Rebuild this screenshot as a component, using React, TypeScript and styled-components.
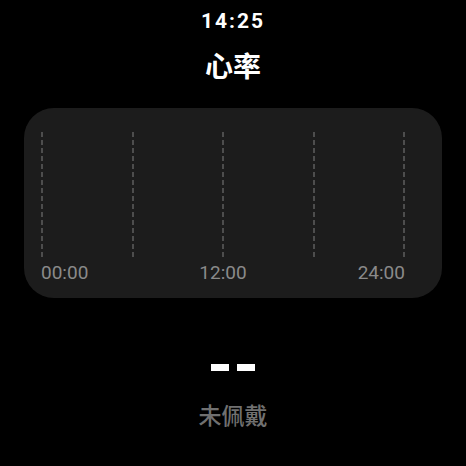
import React from "react";
import styled, { createGlobalStyle } from "styled-components";

const Global = createGlobalStyle`
  html, body { margin: 0; padding: 0; background: #000; }
  body { font-family: Roboto, "Noto Sans CJK SC", sans-serif; }
`;

const Screen = styled.div`
  width: 466px;
  height: 466px;
  background: #000;
  display: flex;
  flex-direction: column;
  align-items: center;
  overflow: hidden;
`;

const Clock = styled.div`
  margin-top: 9px;
  font-size: 21px;
  line-height: 24px;
  font-weight: 700;
  letter-spacing: 2px;
  color: #fff;
`;

const Title = styled.div`
  margin-top: 16px;
  font-family: "Noto Sans CJK SC", sans-serif;
  font-size: 28px;
  line-height: 32px;
  font-weight: 700;
  color: #fff;
`;

const Card = styled.div`
  margin-top: 27px;
  width: 418px;
  height: 190px;
  box-sizing: border-box;
  border-radius: 30px;
  background: #1c1c1c;
  padding: 24px 37px 0 17px;
  display: flex;
  flex-direction: column;
`;

const Grid = styled.div`
  height: 128px;
  display: flex;
  justify-content: space-between;
`;

const DashLine = styled.div`
  width: 2px;
  height: 100%;
  background: repeating-linear-gradient(
    to bottom,
    #4d4d4d 0 5px,
    transparent 5px 8px
  );
`;

const Labels = styled.div`
  margin-top: 1px;
  display: flex;
  justify-content: space-between;
  font-size: 19px;
  line-height: 24px;
  color: #8a8a8a;
`;

const Dashes = styled.div`
  margin-top: 66px;
  display: flex;
  gap: 8px;
`;

const Bar = styled.span`
  width: 18px;
  height: 7px;
  background: #fff;
`;

const Status = styled.div`
  margin-top: 29px;
  font-family: "Noto Sans CJK SC", sans-serif;
  font-size: 23px;
  line-height: 28px;
  font-weight: 500;
  color: #707070;
`;

export default function App() {
  return (
    <>
      <Global />
      <Screen>
        <Clock>14:25</Clock>
        <Title>心率</Title>
        <Card>
          <Grid>
            {[0, 1, 2, 3, 4].map((i) => (
              <DashLine key={i} />
            ))}
          </Grid>
          <Labels>
            <span>00:00</span>
            <span>12:00</span>
            <span>24:00</span>
          </Labels>
        </Card>
        <Dashes>
          <Bar />
          <Bar />
        </Dashes>
        <Status>未佩戴</Status>
      </Screen>
    </>
  );
}
